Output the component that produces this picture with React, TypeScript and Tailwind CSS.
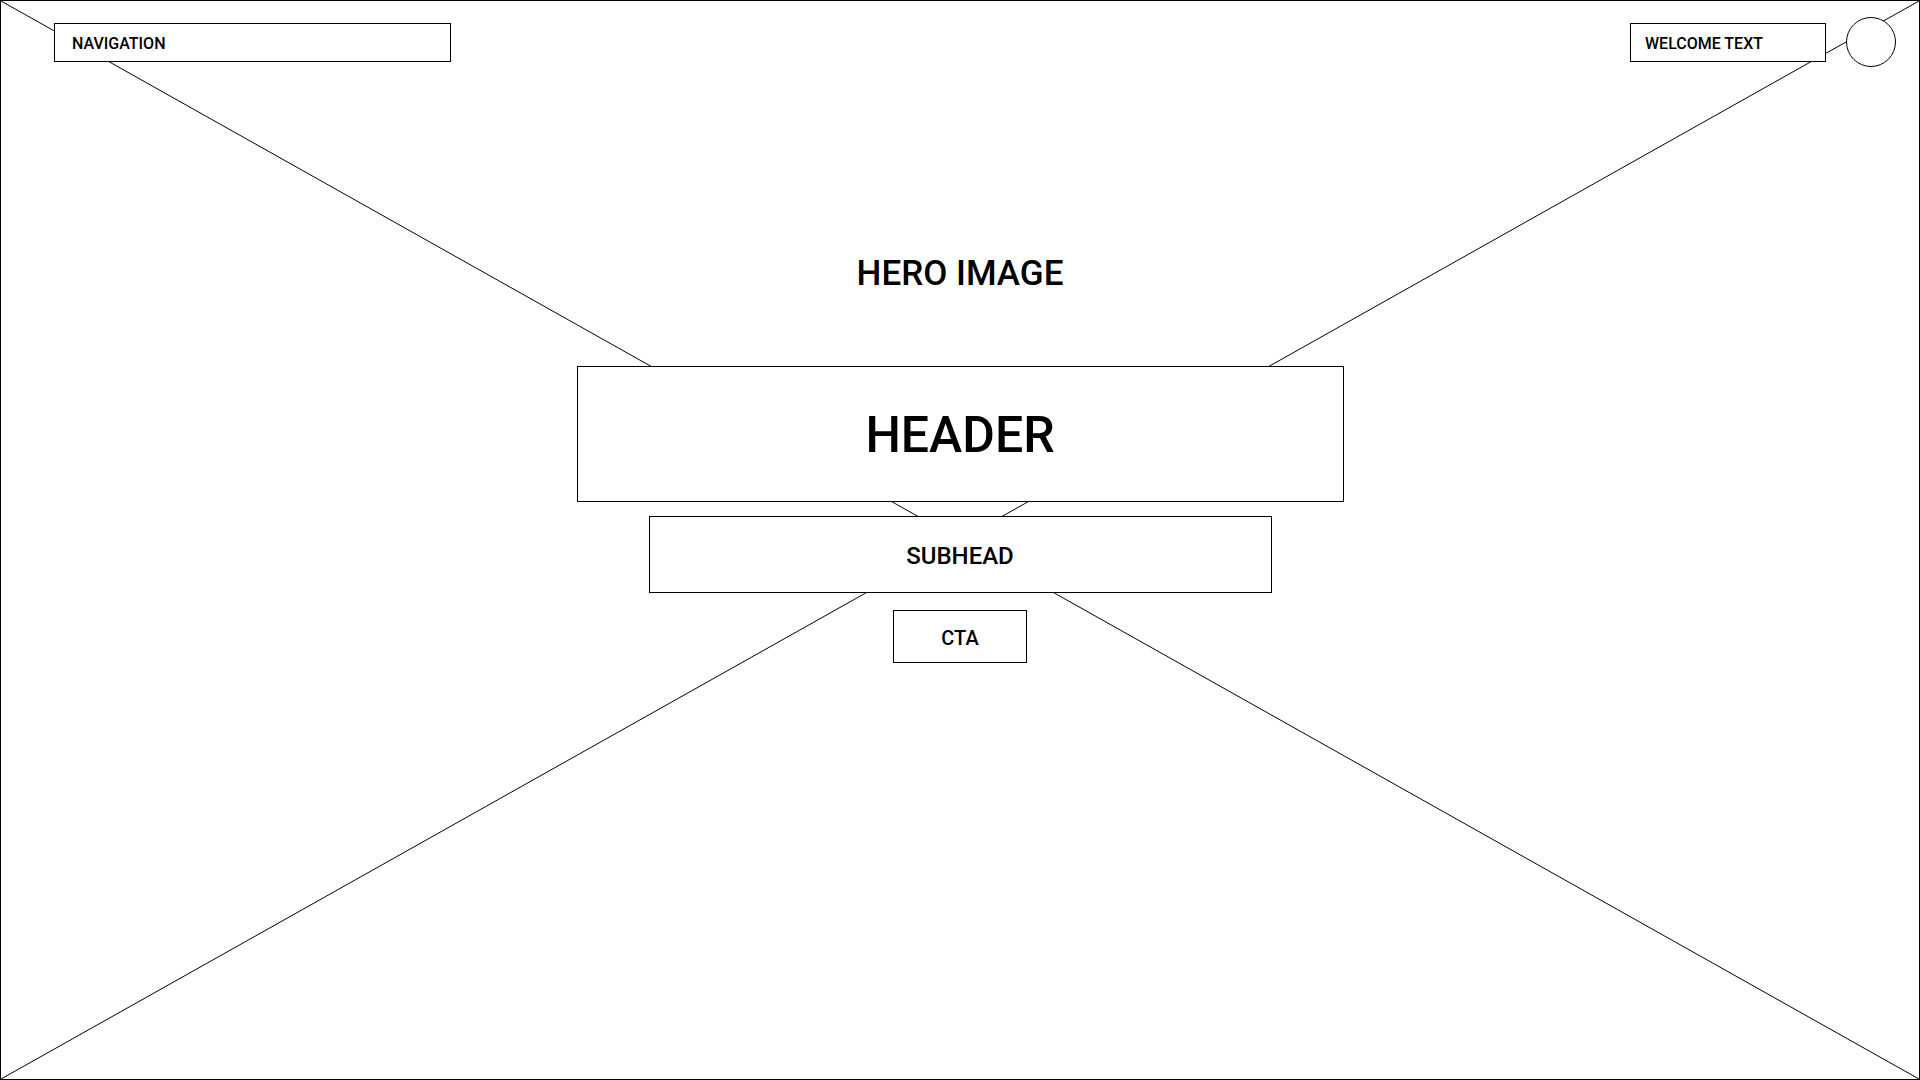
const font = { fontFamily: "Roboto, 'Liberation Sans', sans-serif" };

function PlaceholderCross() {
  return (
    <svg
      className="absolute inset-0 h-full w-full"
      viewBox="0 0 1918 1078"
      preserveAspectRatio="none"
    >
      <line x1="0" y1="0" x2="1918" y2="1078" stroke="#000" strokeWidth="1" />
      <line x1="1918" y1="0" x2="0" y2="1078" stroke="#000" strokeWidth="1" />
    </svg>
  );
}

function Box({ className, children }: { className: string; children: React.ReactNode }) {
  return (
    <div className={`flex items-center justify-center border border-black bg-white pt-[3px] text-black ${className}`}>
      {children}
    </div>
  );
}

export default function App() {
  return (
    <div
      className="relative h-[1080px] w-[1920px] overflow-hidden border border-black bg-white font-medium text-black"
      style={font}
    >
      <PlaceholderCross />

      <div className="relative flex flex-col">
        {/* top bar */}
        <div className="flex items-center justify-between pl-[53px] pr-[23px] pt-4">
          <div className="flex h-[39px] w-[397px] items-center border border-black bg-white pl-[17px] pt-[4px] text-base">
            NAVIGATION
          </div>
          <div className="flex items-center gap-5">
            <div className="flex h-[39px] w-[196px] items-center border border-black bg-white pl-[14px] pt-[3px] text-base">
              WELCOME TEXT
            </div>
            <div className="h-[50px] w-[50px] rounded-full border border-black bg-white" />
          </div>
        </div>

        {/* hero */}
        <div className="mt-[189px] flex flex-col items-center">
          <h2 className="text-[35px] leading-[35px] font-medium">HERO IMAGE</h2>
          <Box className="mt-[75px] h-[136px] w-[767px] text-[50px]">HEADER</Box>
          <Box className="mt-[14px] h-[77px] w-[623px] text-2xl">SUBHEAD</Box>
          <Box className="mt-[17px] h-[53px] w-[134px] text-xl">CTA</Box>
        </div>
      </div>
    </div>
  );
}
